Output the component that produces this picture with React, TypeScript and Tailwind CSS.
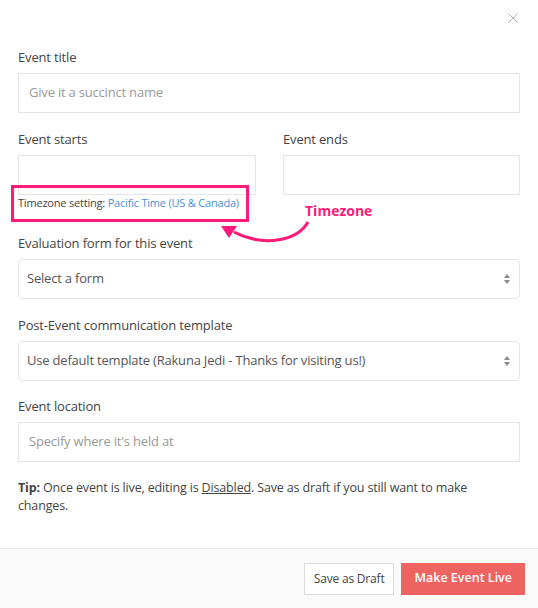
const font = { fontFamily: '"Open Sans", "Liberation Sans", sans-serif' }

function Label({ children }: { children: React.ReactNode }) {
  return <div className="h-[18px] mb-[7px] text-[13px] leading-[18px] tracking-[-0.17px] text-[#444]">{children}</div>
}

function TextInput({ placeholder }: { placeholder?: string }) {
  return (
    <div className="h-[40px] border border-[#e6e6e6] bg-white px-[10px] flex items-center text-[13px] tracking-[-0.2px] text-[#999]">
      {placeholder}
    </div>
  )
}

function SelectBox({ value }: { value: string }) {
  return (
    <div className="h-[40px] border border-[#e6e6e6] rounded-[4px] bg-white pl-[8px] pr-[6px] flex items-center justify-between text-[13px] tracking-[-0.2px] text-[#555]">
      <span>{value}</span>
      <svg width="8" height="12" viewBox="0 0 8 12" className="mr-[2px]">
        <path d="M4 1 L7 5 L1 5 Z" fill="#888" />
        <path d="M4 11 L7 7 L1 7 Z" fill="#888" />
      </svg>
    </div>
  )
}

export default function App() {
  return (
    <div style={font} className="relative h-[608px] w-full bg-white flex flex-col">
      <div className="flex justify-end pt-[13px] pr-[20px]">
        <svg width="10" height="10" viewBox="0 0 10 10">
          <path d="M0.5 0.5 L9.5 9.5 M9.5 0.5 L0.5 9.5" stroke="#b5b5b5" strokeWidth="1" />
        </svg>
      </div>

      <div className="px-[18px] pt-[25px]">
        <Label>Event title</Label>
        <TextInput placeholder="Give it a succinct name" />

        <div className="mt-[17px] grid grid-cols-[238px_237px] justify-between">
          <div>
            <Label>Event starts</Label>
            <TextInput />
            <div className="text-[11px] leading-[16px] tracking-[-0.2px] text-[#444] whitespace-nowrap">
              Timezone setting: <span className="text-[#4a90d9]">Pacific Time (US &amp; Canada)</span>
            </div>
          </div>
          <div>
            <Label>Event ends</Label>
            <TextInput />
          </div>
        </div>

        <div className="mt-[23px]">
          <Label>Evaluation form for this event</Label>
          <SelectBox value="Select a form" />
        </div>

        <div className="mt-[17px]">
          <Label>Post-Event communication template</Label>
          <SelectBox value="Use default template (Rakuna Jedi - Thanks for visiting us!)" />
        </div>

        <div className="mt-[16px]">
          <Label>Event location</Label>
          <TextInput placeholder="Specify where it's held at" />
        </div>

        <p className="mt-[17px] text-[12.5px] leading-[18px] tracking-[-0.15px] text-[#444]">
          <b>Tip:</b> Once event is live, editing is <span className="underline">Disabled</span>. Save as draft if you
          still want to make changes.
        </p>
      </div>

      <div className="mt-auto h-[60px] border-t border-[#e5e5e5] bg-[#fafafa] flex items-center justify-end gap-[7px] pr-[13px]">
        <button className="h-[32px] px-[9px] border border-[#dcdcdc] bg-white text-[12px] tracking-[-0.2px] text-[#444]">
          Save as Draft
        </button>
        <button className="h-[32px] px-[13px] bg-[#ef6461] text-[12.5px] font-semibold text-white">
          Make Event Live
        </button>
      </div>

      {/* annotation overlay */}
      <svg className="absolute left-0 top-0 pointer-events-none" width="538" height="608">
        <rect x="12.5" y="186.5" width="235" height="34" fill="none" stroke="#fe1a79" strokeWidth="3" />
        <path d="M308 222 C 298 240, 265 248, 234 232" fill="none" stroke="#fe1a79" strokeWidth="3" />
        <path d="M221 226 L237 226 L229 238 Z" fill="#fe1a79" />
      </svg>
      <span className="absolute left-[305px] top-[201px] text-[14px] leading-[20px] font-bold text-[#fe1a79]">
        Timezone
      </span>
    </div>
  )
}
